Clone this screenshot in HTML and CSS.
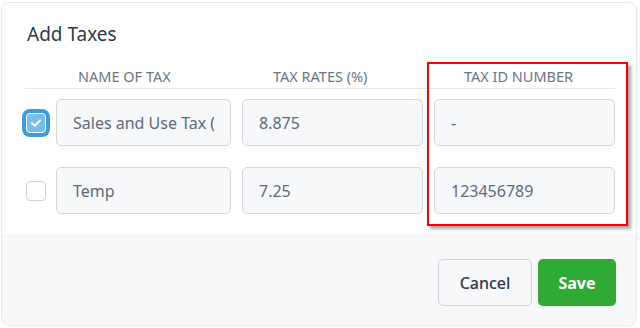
FILE: index.html
```html
<!DOCTYPE html>
<html lang="en">
<head>
    <meta charset="UTF-8">
    <meta name="viewport" content="width=device-width, initial-scale=1.0">
    <title>Add Taxes</title>
    <link rel="stylesheet" href="styles.css">
</head>
<body>

    <div class="modal">
        <div class="modal-body">
            <h2 class="title">Add Taxes</h2>

            <div class="tax-grid">
                <div class="col-head"></div>
                <div class="col-head name-head">NAME OF TAX</div>
                <div class="col-head rate-head">TAX RATES (%)</div>
                <div class="col-head id-head">TAX ID NUMBER</div>

                <span class="check checked">
                    <svg width="12" height="10" viewBox="0 0 12 10"><path d="M2 5.2 L4.8 7.8 L10 2.4" fill="none" stroke="#fff" stroke-width="2" stroke-linecap="round" stroke-linejoin="round"/></svg>
                </span>
                <input class="field" type="text" value="Sales and Use Tax (NY)">
                <input class="field" type="text" value="8.875">
                <input class="field" type="text" value="-">

                <span class="check"></span>
                <input class="field" type="text" value="Temp">
                <input class="field" type="text" value="7.25">
                <input class="field" type="text" value="123456789">
            </div>

            <!-- annotation box round the tax id column -->
            <div class="highlight"></div>
        </div>

        <div class="modal-footer">
            <button class="btn btn-cancel">Cancel</button>
            <button class="btn btn-save">Save</button>
        </div>
    </div>

</body>
</html>
```

FILE: styles.css
```css
body {
    margin: 0;
    padding: 2px 3px 0 1px;
    background-color: #fff;
    font-family: 'Noto Sans', 'Open Sans', sans-serif;
}
.modal {
    border: 1px solid #e8eaed;
    border-radius: 8px;
    overflow: hidden;
    height: 324px;
    box-sizing: border-box;
    display: flex;
    flex-direction: column;
}
.modal-body {
    position: relative;
    padding: 19px 19px 20px 23px;
}
.title {
    margin: 0 0 21px 0;
    padding-left: 2px;
    font-size: 19px;
    font-weight: 400;
    line-height: 24px;
    color: #2f3a4b;
}
.tax-grid {
    display: grid;
    grid-template-columns: 20px 175px 181px 181px;
    column-gap: 11px;
    row-gap: 21px;
    align-items: center;
}
.col-head {
    font-size: 14.5px;
    line-height: 18px;
    color: #6b7685;
    padding-bottom: 3px;
    border-bottom: 1px solid #e6e8eb;
    margin-right: -11px;
    margin-bottom: -11px;
    align-self: end;
    white-space: nowrap;
}
.name-head {
    padding-left: 22px;
}
.rate-head {
    padding-left: 31px;
}
.id-head {
    padding-left: 30px;
    margin-right: 0;
}
.check {
    width: 20px;
    height: 20px;
    box-sizing: border-box;
    border: 1px solid #cfd3d9;
    border-radius: 4px;
    background-color: #fff;
    margin-left: 1px;
    display: flex;
    align-items: center;
    justify-content: center;
}
.check.checked {
    background-color: #79bde9;
    border-color: #fff;
    box-shadow: 0 0 0 4px #3b9ddd;
}
.field {
    height: 47px;
    box-sizing: border-box;
    width: 100%;
    padding: 0 16px;
    border: 1px solid #d3d7dd;
    border-radius: 5px;
    background-color: #f7f8fa;
    color: #5e6a79;
    font-family: inherit;
    font-size: 16px;
    outline: none;
}
.highlight {
    position: absolute;
    left: 425px;
    top: 59px;
    width: 197px;
    height: 160px;
    border: 2px solid #f00;
    box-shadow: 3px 3px 3px rgba(0, 0, 0, 0.35);
    pointer-events: none;
}
.modal-footer {
    flex: 1;
    background-color: #f7f8fa;
    display: flex;
    justify-content: flex-end;
    align-items: flex-start;
    gap: 6px;
    padding: 25px 20px 0 0;
}
.btn {
    height: 47px;
    border-radius: 5px;
    font-family: inherit;
    font-size: 16px;
    cursor: pointer;
}
.btn-cancel {
    width: 94px;
    background-color: #f7f8fa;
    border: 1px solid #d0d4da;
    color: #2d3748;
    font-weight: 500;
}
.btn-save {
    width: 78px;
    background-color: #2eaa35;
    border: none;
    color: #fff;
    font-weight: 700;
}
```
